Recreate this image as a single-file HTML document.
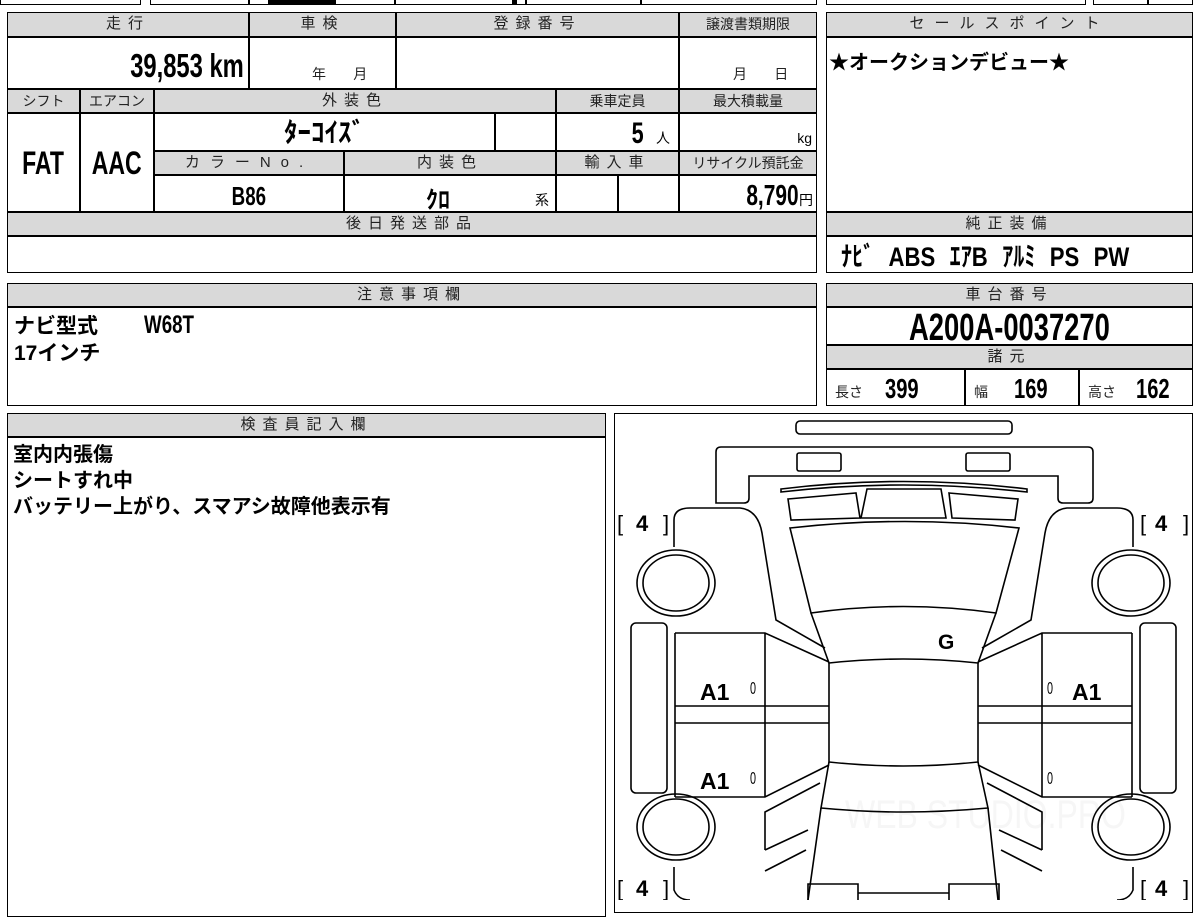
<!DOCTYPE html>
<html><head><meta charset="utf-8"><style>
body{margin:0;width:1200px;height:900px;overflow:hidden;background:#fff;position:relative;font-family:"Liberation Sans","Noto Sans CJK JP",sans-serif;color:#000}
.c{position:absolute;border:1px solid #000;box-sizing:border-box;overflow:hidden}
.h{background:#d9d9d9;text-align:center;font-size:15px;letter-spacing:7px;line-height:22px;color:#222}
.n{font-weight:bold}
.q{display:inline-block;transform:scaleX(.72)}
.s{font-size:14px;color:#222}
</style></head><body>
<div class="c" style="left:0;top:-20px;width:141px;height:25px"></div>
<div class="c" style="left:150px;top:-20px;width:99px;height:25px"></div>
<div class="c" style="left:249px;top:-20px;width:146px;height:25px"></div>
<div class="c" style="left:395px;top:-20px;width:131px;height:25px"></div>
<div class="c" style="left:526px;top:-20px;width:115px;height:25px"></div>
<div class="c" style="left:641px;top:-20px;width:176px;height:25px"></div>
<div style="position:absolute;left:268px;top:0;width:68px;height:4px;background:#000"></div>
<div style="position:absolute;left:512px;top:0;width:5px;height:4px;background:#000"></div>
<div class="c" style="left:826px;top:-20px;width:260px;height:25px"></div>
<div class="c" style="left:1093px;top:-20px;width:55px;height:25px"></div>
<div class="c" style="left:1148px;top:-20px;width:45px;height:25px"></div>

<div class="c h" style="left:7px;top:12px;width:242px;height:25px">走行</div>
<div class="c h" style="left:249px;top:12px;width:147px;height:25px">車検</div>
<div class="c h" style="left:396px;top:12px;width:283px;height:25px">登録番号</div>
<div class="c h" style="left:679px;top:12px;width:138px;height:25px;letter-spacing:0;font-size:14px">譲渡書類期限</div>
<div class="c n" style="left:7px;top:37px;width:242px;height:52px;text-align:right;font-size:33px;line-height:56px;padding-right:4px"><span class="q" style="transform-origin:right">39,853 km</span></div>
<div class="c s" style="left:249px;top:37px;width:147px;height:52px;padding:26px 0 0 62px">年&nbsp;&nbsp;&nbsp;&nbsp;&nbsp;&nbsp;&nbsp;月</div>
<div class="c" style="left:396px;top:37px;width:283px;height:52px"></div>
<div class="c s" style="left:679px;top:37px;width:138px;height:52px;padding:26px 0 0 53px">月&nbsp;&nbsp;&nbsp;&nbsp;&nbsp;&nbsp;&nbsp;日</div>

<div class="c h" style="left:7px;top:89px;width:73px;height:24px;letter-spacing:0;font-size:14px">シフト</div>
<div class="c h" style="left:80px;top:89px;width:74px;height:24px;letter-spacing:0;font-size:14px">エアコン</div>
<div class="c h" style="left:154px;top:89px;width:402px;height:24px">外装色</div>
<div class="c h" style="left:556px;top:89px;width:123px;height:24px;letter-spacing:0;font-size:14px">乗車定員</div>
<div class="c h" style="left:679px;top:89px;width:138px;height:24px;letter-spacing:0;font-size:14px">最大積載量</div>
<div class="c n" style="left:7px;top:113px;width:73px;height:99px;text-align:center;font-size:32px;line-height:99px"><span class="q">FAT</span></div>
<div class="c n" style="left:80px;top:113px;width:74px;height:99px;text-align:center;font-size:32px;line-height:99px"><span class="q">AAC</span></div>
<div class="c n" style="left:154px;top:113px;width:341px;height:38px;text-align:center;font-size:27px;line-height:38px">ﾀｰｺｲｽﾞ</div>
<div class="c" style="left:495px;top:113px;width:61px;height:38px"></div>
<div class="c n" style="left:556px;top:113px;width:123px;height:38px;text-align:right;font-size:30px;line-height:40px;padding-right:8px"><span class="q" style="transform-origin:right">5</span> <span style="font-size:14px;font-weight:normal">&nbsp;人</span></div>
<div class="c" style="left:679px;top:113px;width:138px;height:38px;text-align:right;font-size:14px;line-height:48px;padding-right:4px">kg</div>

<div class="c h" style="left:154px;top:151px;width:190px;height:24px;letter-spacing:10px">カラーNo.</div>
<div class="c h" style="left:344px;top:151px;width:212px;height:24px">内装色</div>
<div class="c h" style="left:556px;top:151px;width:123px;height:24px">輸入車</div>
<div class="c h" style="left:679px;top:151px;width:138px;height:24px;letter-spacing:0;font-size:14px">リサイクル預託金</div>
<div class="c n" style="left:154px;top:175px;width:190px;height:37px;text-align:center;font-size:26px;line-height:40px"><span class="q">B86</span></div>
<div class="c" style="left:344px;top:175px;width:212px;height:37px"><span class="n" style="position:absolute;left:81px;top:4px;font-size:24px">ｸﾛ</span><span style="position:absolute;left:190px;top:14px;font-size:14px">系</span></div>
<div class="c" style="left:556px;top:175px;width:62px;height:37px"></div>
<div class="c" style="left:618px;top:175px;width:61px;height:37px"></div>
<div class="c n" style="left:679px;top:175px;width:138px;height:37px;text-align:right;font-size:29px;line-height:40px;padding-right:3px"><span class="q" style="transform-origin:right">8,790</span><span style="font-size:14px;font-weight:normal">円</span></div>
<div class="c h" style="left:7px;top:212px;width:810px;height:24px">後日発送部品</div>
<div class="c" style="left:7px;top:236px;width:810px;height:37px"></div>

<div class="c h" style="left:826px;top:12px;width:367px;height:25px;letter-spacing:10px">セールスポイント</div>
<div class="c n" style="left:826px;top:37px;width:367px;height:175px;font-size:20px;padding:8px 0 0 2px">★オークションデビュー★</div>
<div class="c h" style="left:826px;top:212px;width:367px;height:24px">純正装備</div>
<div class="c n" style="left:826px;top:236px;width:367px;height:37px;font-size:27px;line-height:40px;padding-left:14px;white-space:nowrap"><span class="q" style="transform-origin:left;transform:scaleX(.82);word-spacing:10px">ﾅﾋﾞ ABS ｴｱB ｱﾙﾐ PS PW</span></div>
<div class="c h" style="left:826px;top:283px;width:367px;height:24px">車台番号</div>
<div class="c n" style="left:826px;top:307px;width:367px;height:38px;text-align:center;font-size:38px;line-height:40px;white-space:nowrap"><span class="q">A200A-0037270</span></div>
<div class="c h" style="left:826px;top:345px;width:367px;height:24px">諸元</div>
<div class="c" style="left:826px;top:369px;width:139px;height:37px"><span class="s" style="position:absolute;left:8px;top:12px">長さ</span><span class="n q" style="position:absolute;left:58px;top:3px;font-size:28px;transform-origin:left">399</span></div>
<div class="c" style="left:965px;top:369px;width:114px;height:37px"><span class="s" style="position:absolute;left:8px;top:12px">幅</span><span class="n q" style="position:absolute;left:48px;top:3px;font-size:28px;transform-origin:left">169</span></div>
<div class="c" style="left:1079px;top:369px;width:114px;height:37px"><span class="s" style="position:absolute;left:8px;top:12px">高さ</span><span class="n q" style="position:absolute;left:56px;top:3px;font-size:28px;transform-origin:left">162</span></div>

<div class="c h" style="left:7px;top:283px;width:810px;height:24px">注意事項欄</div>
<div class="c n" style="left:7px;top:307px;width:810px;height:99px;font-size:21px;line-height:27px;padding:5px 0 0 6px">ナビ型式<br>17インチ<span class="n q" style="position:absolute;left:136px;top:4px;font-size:25px;transform-origin:left;transform:scaleX(.75)">W68T</span></div>
<div class="c h" style="left:7px;top:413px;width:599px;height:24px">検査員記入欄</div>
<div class="c n" style="left:7px;top:437px;width:599px;height:480px;font-size:20px;line-height:26px;padding:4px 0 0 5px">室内内張傷<br>シートすれ中<br>バッテリー上がり、スマアシ故障他表示有</div>
<div class="c" style="left:614px;top:413px;width:579px;height:500px"></div>

<svg style="position:absolute;left:0;top:0" width="1200" height="900" viewBox="0 0 1200 900">
<text x="845" y="828" font-family="Liberation Sans, sans-serif" font-size="40" fill="#f6f6f6" transform="translate(845 0) scale(.8 1) translate(-845 0)">WEB STUDIO.PRO</text>
<g fill="none" stroke="#000" stroke-width="1.6">
<rect x="796" y="421" width="216" height="13" rx="4"/>
<path d="M716,503 L716,452 Q716,447 721,447 L1088,447 Q1093,447 1093,452 L1093,498 Q1093,503 1088,503 L1063,503 Q1058,503 1058,498 L1058,476 L749,476 L749,498 Q749,503 744,503 Z"/>
<rect x="797" y="453" width="44" height="18" rx="2"/>
<rect x="966" y="453" width="44" height="18" rx="2"/>
<path d="M781,492 Q903,478 1027,492 L1027,489 Q903,474 781,489 Z"/>
<path d="M788,499 L856,493 L860,518 L791,520 Z"/>
<path d="M867,489 L941,489 L946,518 L861,518 Z"/>
<path d="M949,493 L1018,499 L1015,520 L952,518 Z"/>
<path d="M790,528 Q905,515 1019,528 L996,613 Q903,600 811,613 Z"/>
<path d="M811,613 L829,663 Q903,655 978,663 L996,613"/>
<path d="M829,663 L829,762 Q903,770 978,762 L978,663"/>
<path d="M829,762 L821,808 Q903,816 988,808 L978,762"/>
<path d="M821,808 L808,900 M988,808 L998,900"/>
<path d="M808,900 L808,884 L858,884 L858,900 M949,900 L949,884 L999,884 L999,900 M858,893 L949,893"/>
<path d="M674,547 L674,520 Q674,508 690,508 L740,508 Q758,510 762,533 L776,620 L825,648"/>
<path d="M1133,547 L1133,520 Q1133,508 1117,508 L1067,508 Q1049,510 1045,533 L1031,620 L982,648"/>
<ellipse cx="676" cy="583" rx="39" ry="33"/><ellipse cx="676" cy="583" rx="33" ry="28"/>
<ellipse cx="676" cy="827" rx="39" ry="33"/><ellipse cx="676" cy="827" rx="33" ry="28"/>
<ellipse cx="1131" cy="583" rx="39" ry="33"/><ellipse cx="1131" cy="583" rx="33" ry="28"/>
<ellipse cx="1131" cy="827" rx="39" ry="33"/><ellipse cx="1131" cy="827" rx="33" ry="28"/>
<rect x="631" y="623" width="36" height="170" rx="5"/>
<rect x="1140" y="623" width="36" height="170" rx="5"/>
<path d="M675,633 L765,633 L829,662 M675,706 L829,706 M675,723 L829,723 M675,797 L765,797 L829,765 M765,633 L765,797 M675,633 L675,797"/>
<path d="M765,850 L765,812 L820,783 M765,850 L808,830 M765,871 L806,850"/>
<path d="M674,867 L674,890 Q678,900 690,900"/>
<path d="M1132,633 L1042,633 L978,662 M1132,706 L978,706 M1132,723 L978,723 M1132,797 L1042,797 L978,765 M1042,633 L1042,797 M1132,633 L1132,797"/>
<path d="M1042,850 L1042,812 L987,783 M1042,850 L999,830 M1042,871 L1001,850"/>
<path d="M1133,867 L1133,890 Q1129,900 1117,900"/>
</g>
<g font-family="Liberation Sans, sans-serif" font-weight="bold" fill="#000">
<text x="617" y="531" font-size="22" font-weight="normal">[</text><text x="636" y="531" font-size="22">4</text><text x="663" y="531" font-size="22" font-weight="normal">]</text>
<text x="1140" y="531" font-size="22" font-weight="normal">[</text><text x="1155" y="531" font-size="22">4</text><text x="1183" y="531" font-size="22" font-weight="normal">]</text>
<text x="617" y="896" font-size="22" font-weight="normal">[</text><text x="636" y="896" font-size="22">4</text><text x="663" y="896" font-size="22" font-weight="normal">]</text>
<text x="1140" y="896" font-size="22" font-weight="normal">[</text><text x="1155" y="896" font-size="22">4</text><text x="1183" y="896" font-size="22" font-weight="normal">]</text>
<text x="700" y="700" font-size="23">A1</text>
<text x="700" y="789" font-size="23">A1</text>
<text x="1072" y="700" font-size="23">A1</text>
<text x="938" y="649" font-size="21">G</text>
<g font-weight="normal" font-size="18">
<text x="750" y="694" transform="translate(750 0) scale(.6 1) translate(-750 0)">0</text>
<text x="750" y="784" transform="translate(750 0) scale(.6 1) translate(-750 0)">0</text>
<text x="1047" y="694" transform="translate(1047 0) scale(.6 1) translate(-1047 0)">0</text>
<text x="1047" y="784" transform="translate(1047 0) scale(.6 1) translate(-1047 0)">0</text>
</g>
</g>
</svg>
</body></html>
